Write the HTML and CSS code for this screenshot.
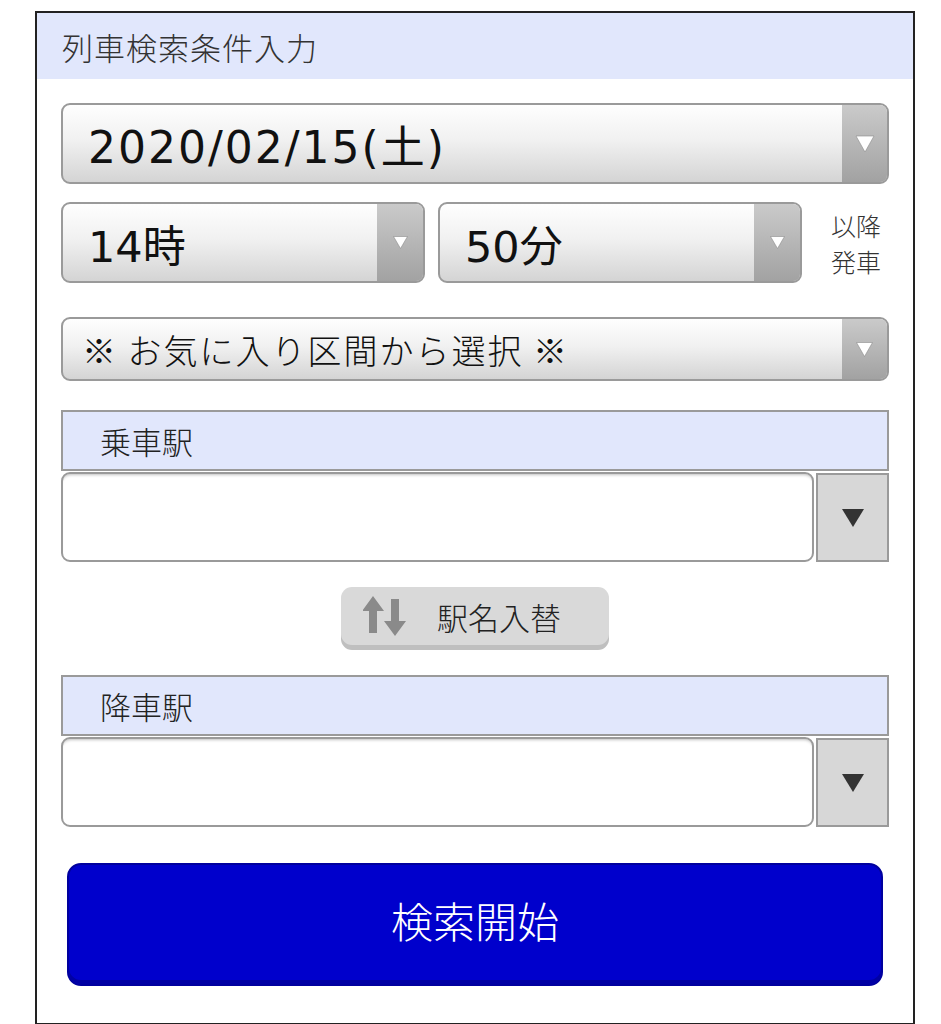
FILE: index.html
```html
<!DOCTYPE html>
<html lang="ja">
<head>
  <meta charset="UTF-8" />
  <meta name="viewport" content="width=device-width, initial-scale=1" />
  <title>列車検索</title>
  <link rel="stylesheet" href="styles.css">
</head>

<body>
  <div class="search-panel">
    <div class="panel-title">列車検索条件入力</div>

    <form class="search-form">
      <!-- 日付 -->
      <div class="select-box select-date">
        <span class="select-value">2020/02/15(土)</span>
        <span class="select-arrow">
          <svg width="20" height="18" viewBox="0 0 20 18"><polygon points="1,1 19,1 10,17" fill="#fff" stroke="#8c8c8c" stroke-width="0.6"/></svg>
        </span>
      </div>

      <!-- 時刻 -->
      <div class="time-row">
        <div class="select-box select-time">
          <span class="select-value">14時</span>
          <span class="select-arrow">
            <svg width="15" height="13" viewBox="0 0 15 13"><polygon points="0.5,0.5 14.5,0.5 7.5,12.5" fill="#fff" stroke="#8c8c8c" stroke-width="0.6"/></svg>
          </span>
        </div>
        <div class="select-box select-time">
          <span class="select-value">50分</span>
          <span class="select-arrow">
            <svg width="15" height="13" viewBox="0 0 15 13"><polygon points="0.5,0.5 14.5,0.5 7.5,12.5" fill="#fff" stroke="#8c8c8c" stroke-width="0.6"/></svg>
          </span>
        </div>
        <div class="time-note">以降<br>発車</div>
      </div>

      <!-- お気に入り -->
      <div class="select-box select-fav">
        <span class="select-value">※ お気に入り区間から選択 ※</span>
        <span class="select-arrow">
          <svg width="17" height="15" viewBox="0 0 17 15"><polygon points="0.5,0.5 16.5,0.5 8.5,14.5" fill="#fff" stroke="#8c8c8c" stroke-width="0.6"/></svg>
        </span>
      </div>

      <!-- 乗車駅 -->
      <div class="station-label">乗車駅</div>
      <div class="station-row">
        <div class="station-input"></div>
        <div class="station-drop">
          <svg width="22" height="18" viewBox="0 0 22 18"><polygon points="0,0 22,0 11,18" fill="#333"/></svg>
        </div>
      </div>

      <button type="button" class="swap-btn">
        <svg class="swap-icon" width="46" height="42" viewBox="0 0 46 42">
          <polygon points="10,1 21,16 14,16 14,38 6,38 6,16 -1,16" fill="#8a8a8a"/>
          <polygon points="28,4 36,4 36,26 43,26 32,41 21,26 28,26" fill="#8a8a8a"/>
        </svg>
        <span>駅名入替</span>
      </button>

      <!-- 降車駅 -->
      <div class="station-label label-arrive">降車駅</div>
      <div class="station-row">
        <div class="station-input"></div>
        <div class="station-drop">
          <svg width="22" height="18" viewBox="0 0 22 18"><polygon points="0,0 22,0 11,18" fill="#333"/></svg>
        </div>
      </div>

      <button type="button" class="search-btn">検索開始</button>
    </form>
  </div>
</body>
</html>
```

FILE: styles.css
```css
body {
  margin: 0;
  padding: 0;
  background: #fff;
  font-family: "DejaVu Sans", "Noto Sans CJK JP", sans-serif;
  color: #111;
}

/* 外枠 */
.search-panel {
  box-sizing: border-box;
  width: 880px;
  margin: 11px 0 0 35px;
  border: 2px solid #222;
}

.panel-title {
  height: 66px;
  display: flex;
  align-items: center;
  padding-left: 25px;
  background: #e1e7fc;
  font-family: "Noto Sans CJK JP", sans-serif;
  font-size: 31px;
  font-weight: 300;
  letter-spacing: 1px;
  color: #333;
}

.search-form {
  padding: 24px 24px 37px;
}

/* プルダウン */
.select-box {
  box-sizing: border-box;
  display: flex;
  align-items: stretch;
  border: 2px solid #9a9a9a;
  border-radius: 9px;
  overflow: hidden;
  background: linear-gradient(#fefefe, #f1f1f1 45%, #d4d4d4);
}

.select-value {
  flex: 1;
  display: flex;
  align-items: center;
  padding-left: 25px;
  white-space: nowrap;
}

.select-arrow {
  width: 45px;
  display: flex;
  align-items: center;
  justify-content: center;
  background: linear-gradient(#cacaca, #a2a2a2);
}

.select-date {
  height: 81px;
  font-size: 44px;
  letter-spacing: 2px;
}

.time-row {
  display: flex;
  align-items: center;
  gap: 13px;
  margin-top: 18px;
}

.select-time {
  width: 364px;
  height: 81px;
  font-size: 43px;
}

.select-time .select-arrow {
  width: 46px;
}

.time-note {
  margin-left: 16px;
  font-family: "Noto Sans CJK JP", sans-serif;
  font-size: 25px;
  font-weight: 300;
  line-height: 36px;
  color: #333;
}

.select-fav {
  height: 64px;
  margin-top: 34px;
  font-family: "Noto Sans CJK JP", sans-serif;
  font-size: 34px;
  font-weight: 300;
  letter-spacing: 2px;
}

.select-fav .select-value {
  padding-left: 19px;
}

/* 駅入力 */
.station-label {
  box-sizing: border-box;
  height: 61px;
  margin-top: 29px;
  display: flex;
  align-items: center;
  padding-left: 37px;
  background: #e1e7fc;
  border: 2px solid #9a9a9a;
  font-family: "Noto Sans CJK JP", sans-serif;
  font-size: 31px;
  font-weight: 300;
  color: #222;
}

.label-arrive {
  margin-top: 30px;
}

.station-row {
  display: flex;
  gap: 2px;
  height: 90px;
  margin-top: 1px;
}

.station-input {
  box-sizing: border-box;
  flex: 1;
  background: #fff;
  border: 2px solid #9a9a9a;
  border-radius: 9px;
  box-shadow: inset 0 3px 3px -2px rgba(0, 0, 0, 0.25);
}

.station-drop {
  box-sizing: border-box;
  width: 73px;
  margin-top: 1px;
  display: flex;
  align-items: center;
  justify-content: center;
  background: #d7d7d7;
  border: 2px solid #9a9a9a;
}

/* 駅名入替 */
.swap-btn {
  display: flex;
  align-items: center;
  gap: 28px;
  width: 268px;
  height: 58px;
  margin: 25px auto 0;
  padding: 0 0 0 22px;
  background: #d9d9d9;
  border: none;
  border-radius: 11px;
  box-shadow: 0 5px 0 #bfbfbf;
  font-family: "Noto Sans CJK JP", sans-serif;
  font-size: 31px;
  font-weight: 300;
  color: #222;
}

.swap-icon {
  filter: blur(0.7px);
}

/* 検索開始 */
.search-btn {
  display: block;
  box-sizing: border-box;
  width: calc(100% - 12px);
  height: 123px;
  margin: 36px 6px 0;
  padding: 0 0 10px;
  background: #0000cc;
  border: 2px solid #00009e;
  border-radius: 14px;
  box-shadow: inset 0 -4px 0 #0000a4;
  font-family: "Noto Sans CJK JP", sans-serif;
  font-size: 42px;
  font-weight: 300;
  color: #fff;
}
```
